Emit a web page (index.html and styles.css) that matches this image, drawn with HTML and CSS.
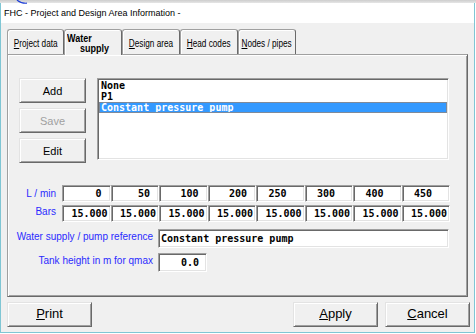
FILE: index.html
```html
<!DOCTYPE html>
<html>
<head>
<meta charset="utf-8">
<link rel="stylesheet" href="styles.css">
</head>
<body>
<div class="topstrip">
  <svg class="arc" width="14" height="4" viewBox="0 0 14 4"><path d="M3 0 Q7 3.6 13 3.2" fill="none" stroke="#1f3fd8" stroke-width="1.2"/></svg>
</div>
<div class="window">
  <div class="titlebar">FHC - Project and Design Area Information -</div>
  <div class="client">
    <div class="tabs">
      <div class="tab first"><span class="cap"><u>P</u>roject data</span></div>
      <div class="tab sel"><span class="cap l1">Water</span><span class="cap l2">supply</span></div>
      <div class="tab"><span class="cap"><u>D</u>esign area</span></div>
      <div class="tab"><span class="cap"><u>H</u>ead codes</span></div>
      <div class="tab"><span class="cap"><u>N</u>odes / pipes</span></div>
    </div>
    <div class="panel">
      <div class="top-row">
        <div class="btncol">
          <button class="btn">Add</button>
          <button class="btn" disabled>Save</button>
          <button class="btn">Edit</button>
        </div>
        <div class="listbox">
          <div class="item">None</div>
          <div class="item">P1</div>
          <div class="item selected">Constant pressure pump</div>
        </div>
      </div>
      <div class="grid">
        <div class="glabel">L / min</div>
        <div class="cell a">0</div>
        <div class="cell a">50</div>
        <div class="cell a">100</div>
        <div class="cell a">200</div>
        <div class="cell b">250</div>
        <div class="cell b">300</div>
        <div class="cell b">400</div>
        <div class="cell b">450</div>
        <div class="glabel up">Bars</div>
        <div class="cell c">15.000</div>
        <div class="cell c">15.000</div>
        <div class="cell c">15.000</div>
        <div class="cell c">15.000</div>
        <div class="cell c">15.000</div>
        <div class="cell c">15.000</div>
        <div class="cell c">15.000</div>
        <div class="cell c">15.000</div>
      </div>
      <div class="frow first-row">
        <div class="flabel">Water supply / pump reference</div>
        <div class="field wide">Constant pressure pump</div>
      </div>
      <div class="frow">
        <div class="flabel">Tank height in m for qmax</div>
        <div class="field small">0.0</div>
      </div>
    </div>
    <div class="footer">
      <button class="btn big"><u>P</u>rint</button>
      <div class="spacer"></div>
      <button class="btn big"><u>A</u>pply</button>
      <button class="btn big"><u>C</u>ancel</button>
    </div>
  </div>
</div>
</body>
</html>
```

FILE: styles.css
```css
html, body {
  margin: 0;
  padding: 0;
}
body {
  width: 476px;
  height: 334px;
  overflow: hidden;
  background: #ffffff;
  font-family: "Liberation Sans", Arial, sans-serif;
  position: relative;
}
.topstrip {
  height: 3px;
  background: linear-gradient(#cdcdcd, #e6e6e6);
  position: relative;
}
.arc {
  position: absolute;
  left: 14px;
  top: 0;
}
.window {
  width: 473px;
  height: 329px;
  border-left: 1px solid #7fc6d4;
  border-right: 1px solid #7fc6d4;
  border-bottom: 1px solid #7fc6d4;
  display: flex;
  flex-direction: column;
}
.titlebar {
  height: 20px;
  flex: none;
  background: #ffffff;
  font-size: 9px;
  line-height: 21px;
  padding-left: 3px;
  color: #000;
  white-space: nowrap;
}
.client {
  flex: 1;
  background: #f0f0f0;
  padding-left: 6px;
  display: flex;
  flex-direction: column;
}
.tabs {
  height: 31px;
  flex: none;
  display: flex;
  align-items: flex-end;
}
.tab {
  box-sizing: border-box;
  width: 58px;
  height: 25px;
  border: 1px solid #a0a0a0;
  border-right-color: #696969;
  border-bottom: none;
  border-radius: 3px 3px 0 0;
  box-shadow: inset 1px 1px #ffffff;
  display: flex;
  align-items: center;
  justify-content: center;
  padding-top: 2px;
  font-size: 10px;
  color: #000;
  white-space: nowrap;
}
.cap {
  display: inline-block;
  transform: scaleX(0.82);
}
.tab.first {
  width: 57px;
}
.tab.sel {
  height: 26px;
  margin-bottom: -1px;
  position: relative;
  z-index: 1;
  background: #f0f0f0;
  flex-direction: column;
  align-items: flex-start;
  justify-content: flex-start;
  padding: 3px 0 0 2px;
  font-weight: bold;
  font-size: 11px;
  line-height: 10px;
}
.tab.sel .cap {
  transform-origin: left center;
}
.tab.sel .l2 {
  margin-left: 13px;
}
.panel {
  box-sizing: border-box;
  width: 461px;
  height: 243px;
  flex: none;
  border: 1px solid #a0a0a0;
  border-right-color: #696969;
  border-bottom-color: #696969;
  box-shadow: inset 1px 1px #ffffff, inset -1px -1px #a0a0a0;
  padding: 23px 0 0 11px;
}
.top-row {
  display: flex;
  gap: 11px;
}
.btncol {
  width: 67px;
  display: flex;
  flex-direction: column;
  gap: 5px;
}
.btn {
  box-sizing: border-box;
  width: 67px;
  height: 25px;
  margin: 0;
  padding: 0;
  background: #f0f0f0;
  border: 1px solid;
  border-color: #e3e3e3 #696969 #696969 #e3e3e3;
  box-shadow: inset 1px 1px #ffffff, inset -1px -1px #a0a0a0;
  font-family: "Liberation Sans", Arial, sans-serif;
  font-size: 11px;
  color: #000;
  display: flex;
  align-items: center;
  justify-content: center;
}
.btn:disabled {
  color: #a0a0a0;
}
.listbox {
  box-sizing: border-box;
  width: 352px;
  height: 82px;
  background: #ffffff;
  border: 1px solid;
  border-color: #a0a0a0 #ffffff #ffffff #a0a0a0;
  box-shadow: inset 1px 1px #696969, inset -1px -1px #e3e3e3;
  padding: 1px;
}
.item {
  height: 11px;
  line-height: 11px;
  padding-left: 2px;
  font-family: "DejaVu Sans Mono", "Liberation Mono", monospace;
  font-weight: bold;
  font-size: 10px;
  color: #000;
  white-space: nowrap;
}
.item.selected {
  background: #3399ff;
  color: #ffffff;
  outline: 1px solid #7f8a99;
  outline-offset: -1px;
}
.grid {
  margin-top: 22px;
  display: grid;
  grid-template-columns: 43px repeat(8, 48.5px);
  grid-auto-rows: 17px;
  row-gap: 3px;
}
.glabel {
  box-sizing: border-box;
  padding-right: 6px;
  display: flex;
  align-items: center;
  justify-content: flex-end;
  white-space: nowrap;
  font-size: 10px;
  color: #2b2bff;
}
.glabel.up {
  padding-bottom: 5px;
}
.cell, .field {
  box-sizing: border-box;
  background: #ffffff;
  border: 1px solid;
  border-color: #a0a0a0 #ffffff #ffffff #a0a0a0;
  box-shadow: inset 1px 1px #696969, inset -1px -1px #e3e3e3;
  font-family: "DejaVu Sans Mono", "Liberation Mono", monospace;
  font-weight: bold;
  font-size: 10px;
  color: #000;
  white-space: nowrap;
}
.cell {
  text-align: right;
  line-height: 16px;
}
.cell.a {
  padding-right: 8px;
}
.cell.b {
  padding-right: 17px;
}
.cell.c {
  padding-right: 2px;
}
.frow {
  display: flex;
  align-items: center;
  gap: 5px;
  margin-top: 5px;
}
.frow.first-row {
  margin-top: 7px;
}
.flabel {
  width: 134px;
  display: flex;
  justify-content: flex-end;
  white-space: nowrap;
  font-size: 10px;
  color: #2b2bff;
  padding-bottom: 4px;
}
.field {
  height: 19px;
  line-height: 18px;
}
.field.wide {
  width: 291px;
  padding-left: 2px;
}
.field.small {
  width: 49px;
  text-align: right;
  padding-right: 7px;
}
.footer {
  margin-top: 5px;
  width: 463px;
  display: flex;
  gap: 7px;
}
.spacer {
  flex: 1;
}
.btn.big {
  width: 85px;
  height: 25px;
  font-size: 13px;
  padding-bottom: 3px;
}
```
